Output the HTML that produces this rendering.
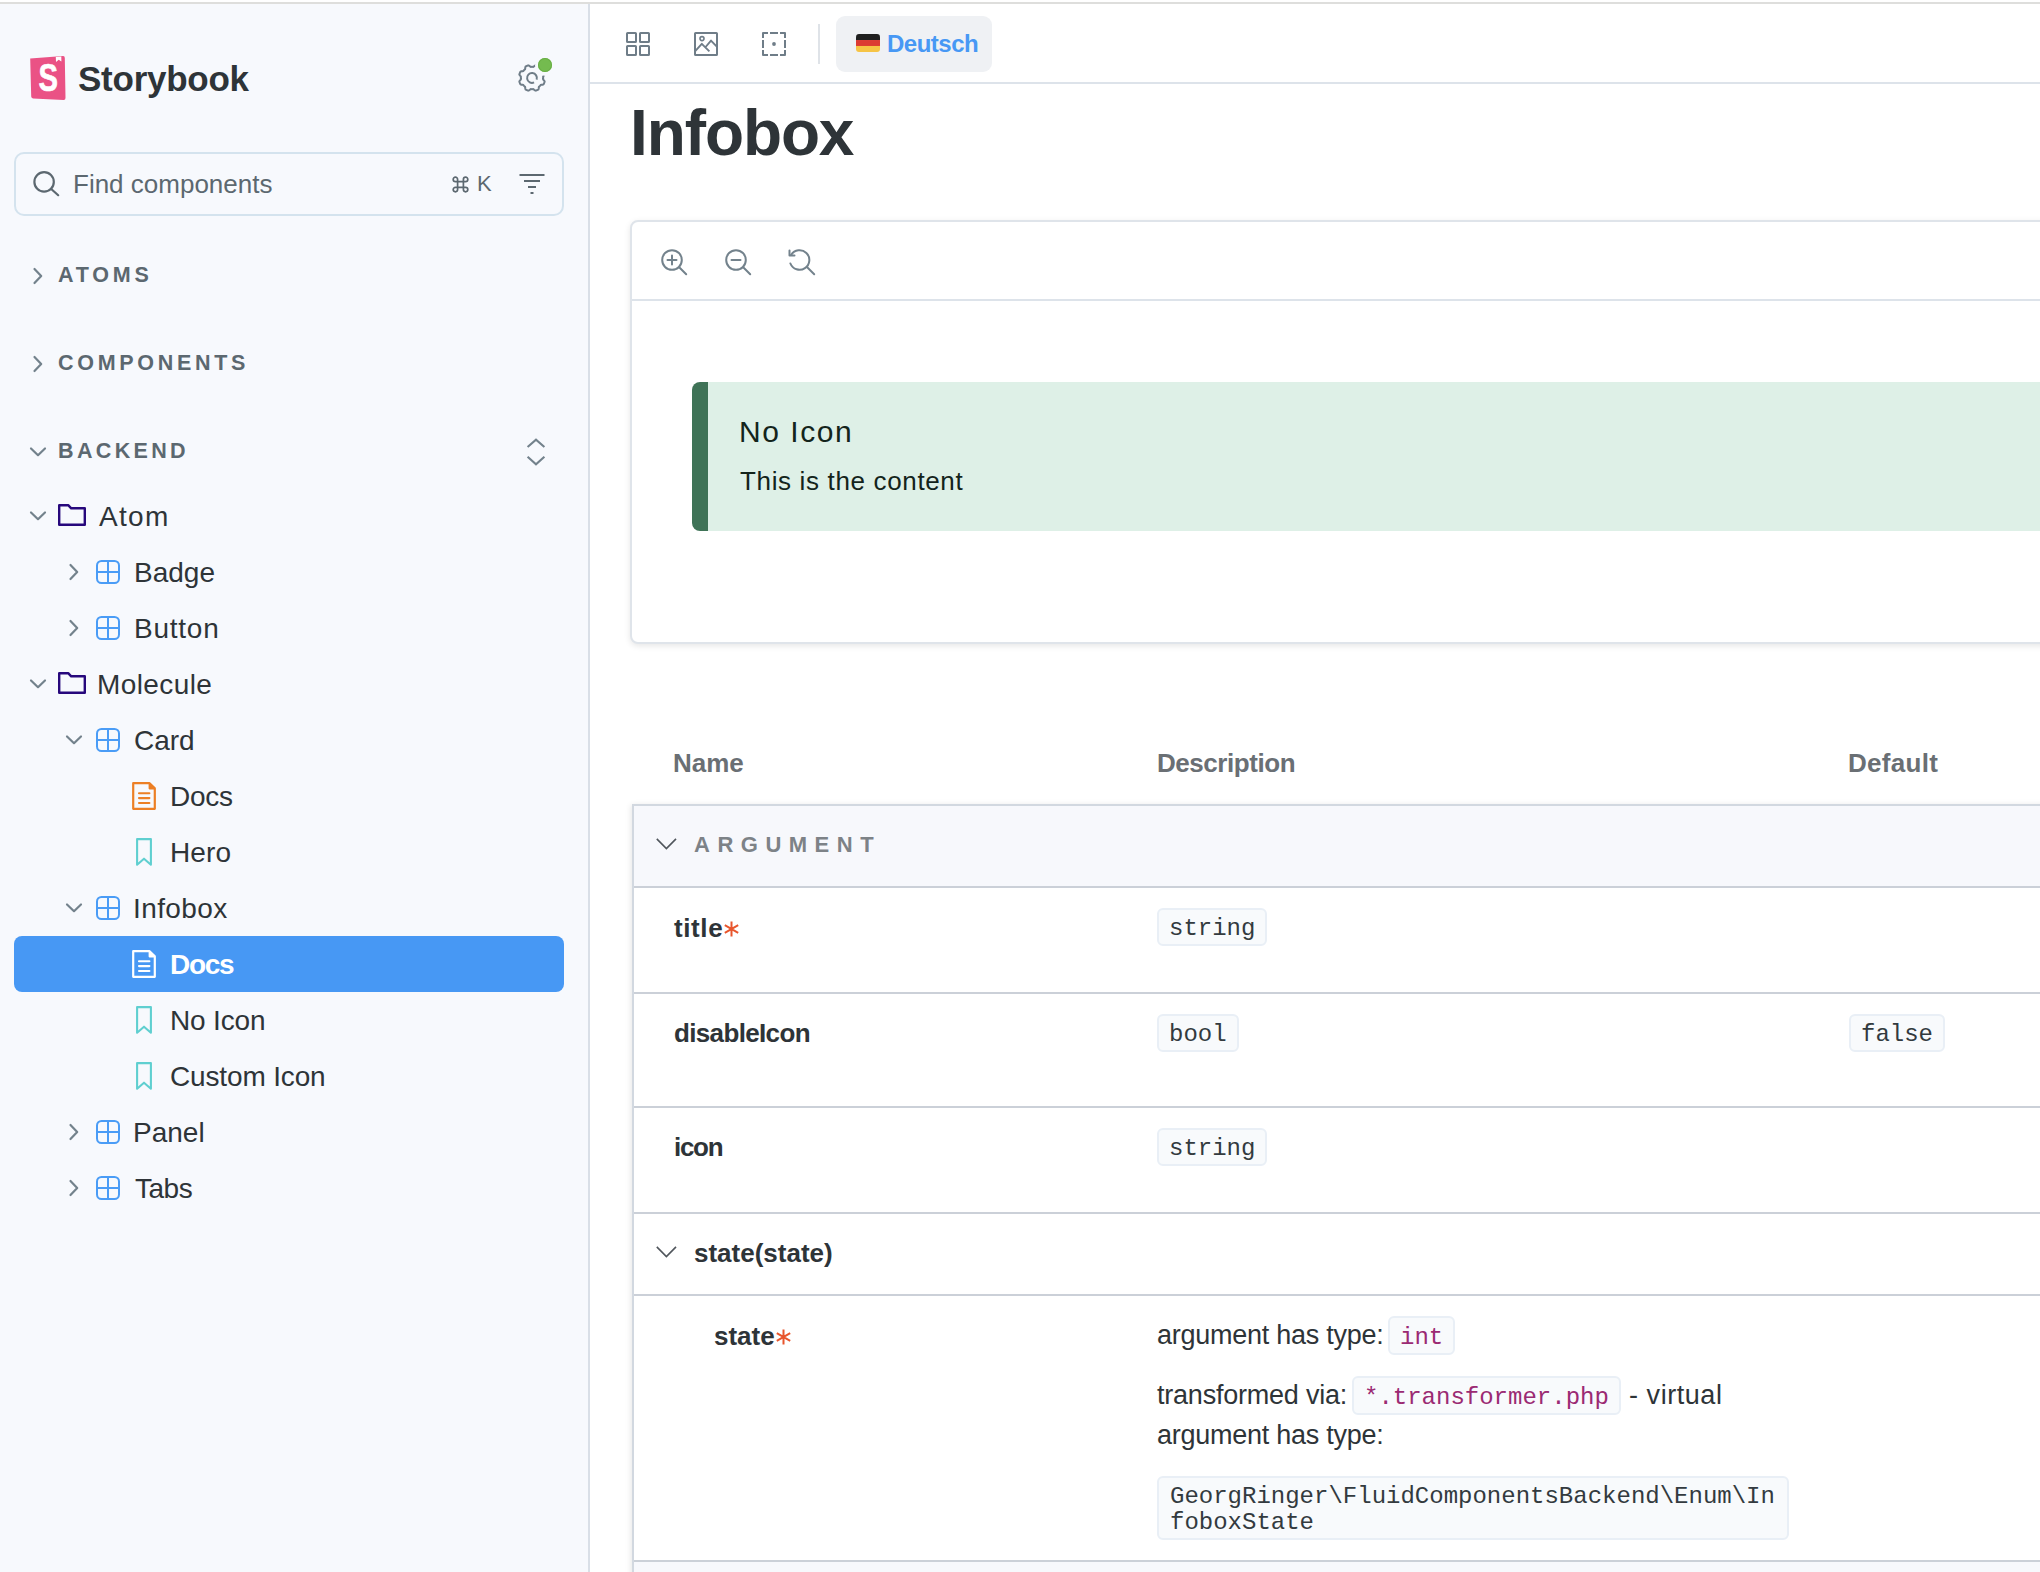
<!DOCTYPE html>
<html>
<head>
<meta charset="utf-8">
<title>Storybook</title>
<style>
*{box-sizing:border-box;margin:0;padding:0}
html,body{width:2040px;height:1572px;overflow:hidden;background:#fff}
body{font-family:"Liberation Sans",sans-serif;color:#2e3438;position:relative}
.abs{position:absolute}
svg{display:block;overflow:visible}
#topline{left:0;top:2px;width:2040px;height:2px;background:#dededc}
#sidebar{left:0;top:4px;width:588px;height:1568px;background:#f7f9fd}
#sdiv{left:588px;top:4px;width:2px;height:1568px;background:#d9dfe7}
#main{left:590px;top:4px;width:1450px;height:1568px;background:#fff;overflow:hidden}
.t{position:absolute;white-space:nowrap;line-height:56px;height:56px}
.tree{margin-top:1px}
.tree{font-size:28px;color:#2e3438}
.sec{font-size:21.5px;font-weight:bold;letter-spacing:3.8px;color:#5c6870}
.ic{position:absolute}
#logotxt{left:78px;top:57px;font-size:35px;line-height:44px;font-weight:bold;color:#2e3438;letter-spacing:-0.25px;white-space:nowrap}
#sel{left:14px;top:936px;width:550px;height:56px;border-radius:8px;background:#4798f4}
#search{left:14px;top:152px;width:550px;height:64px;border:2px solid #d4e3ee;border-radius:10px}
#tb-line{left:590px;top:82px;width:1450px;height:2px;background:#dde3ea}
#lang{left:836px;top:16px;width:156px;height:56px;border-radius:9px;background:#eff1f4}
#preview{left:630px;top:220px;width:1500px;height:424px;border:2px solid #dfe4ea;border-radius:8px;box-shadow:0 2px 6px rgba(0,0,0,.10);background:#fff}
#pv-line{left:632px;top:299px;width:1410px;height:2px;background:#dde3ea}
#infobox{left:692px;top:382px;width:1400px;height:149px;background:#def0e7;border-left:16px solid #3f7357;border-radius:8px 0 0 8px}
.hd{font-size:26px;font-weight:bold;color:#6a6f74}
#table{left:632px;top:804px;width:1500px;height:900px;border:2px solid #d2d8e0;border-right:0;box-shadow:0 2px 6px 1px rgba(0,0,0,.10);background:#fff}
.rl{position:absolute;left:634px;width:1410px;height:2px;background:#cbd0d8}
.secrow{position:absolute;left:634px;width:1410px;background:#f7f8fc}
.nm{font-size:26px;font-weight:bold;color:#2e3438}
.req{color:#e8552c;font-weight:normal}
.code{position:absolute;font-family:"Liberation Mono",monospace;font-size:24px;line-height:27px;color:#333a3f;background:#f8fafc;border:2px solid #e9eff6;border-radius:6px;white-space:nowrap}
.pink{color:#9b2a73}
.desc{font-size:27px;color:#2e3438}
#h1{left:630px;top:95px;font-size:64px;line-height:76px;font-weight:bold;color:#2e3438;letter-spacing:-1.1px;white-space:nowrap}
.c1{height:38px;padding:5px 10px 0 10px}
.c2{height:39px;padding:6px 10px 0 10px}

</style>
</head>
<body>
<div class="abs" id="topline"></div>
<div class="abs" id="sidebar"></div>
<div class="abs" id="sdiv"></div>
<div class="abs" id="main"></div>
<svg class="ic" style="left:30px;top:56px" width="36" height="44" viewBox="0 0 36 44">
<path d="M0.2 2.6 L33.0 0.1 Q34.8 0 34.8 1.9 L35.5 42 Q35.5 44 33.5 43.9 L3.0 42.4 Q1.3 42.3 1.2 40.6 Z" fill="#ea5285"/>
<path d="M25.8 0.9 L31.3 0.5 L31.4 5.6 L28.7 3.7 L26 5.9 Z" fill="#fff"/>
<text x="18.3" y="35.2" text-anchor="middle" font-family="Liberation Sans, sans-serif" font-weight="bold" font-size="38" fill="#fff" stroke="#fff" stroke-width="0.7" textLength="19.5" lengthAdjust="spacingAndGlyphs">S</text>
</svg>
<div class="abs" id="logotxt">Storybook</div>
<svg class="ic" style="left:517px;top:63px" width="30" height="30" viewBox="0 0 30 30">
<g fill="none" stroke="#6f7d88" stroke-width="2" stroke-linejoin="round" stroke-linecap="butt">
<path d="M26.15 15.00 L26.15 15.19 L26.14 15.39 L26.13 15.58 L26.12 15.78 L26.11 15.97 L26.09 16.17 L26.12 16.36 L26.29 16.59 L26.48 16.82 L26.67 17.06 L26.87 17.31 L27.06 17.56 L27.24 17.83 L27.41 18.09 L27.56 18.36 L27.64 18.62 L27.58 18.84 L27.51 19.06 L27.43 19.28 L27.36 19.50 L27.28 19.71 L27.19 19.93 L27.10 20.14 L27.01 20.35 L26.92 20.56 L26.82 20.76 L26.72 20.97 L26.61 21.17 L26.50 21.38 L26.26 21.50 L25.96 21.59 L25.65 21.66 L25.34 21.71 L25.02 21.76 L24.71 21.80 L24.40 21.83 L24.11 21.86 L23.83 21.90 L23.67 22.02 L23.54 22.17 L23.42 22.32 L23.29 22.46 L23.15 22.60 L23.02 22.75 L22.88 22.88 L22.75 23.02 L22.60 23.15 L22.46 23.29 L22.32 23.42 L22.17 23.54 L22.02 23.67 L21.90 23.83 L21.86 24.11 L21.83 24.40 L21.80 24.71 L21.76 25.02 L21.71 25.34 L21.66 25.65 L21.59 25.96 L21.50 26.26 L21.38 26.50 L21.17 26.61 L20.97 26.72 L20.76 26.82 L20.56 26.92 L20.35 27.01 L20.14 27.10 L19.93 27.19 L19.71 27.28 L19.50 27.36 L19.28 27.43 L19.06 27.51 L18.84 27.58 L18.62 27.64 L18.36 27.56 L18.09 27.41 L17.83 27.24 L17.56 27.06 L17.31 26.87 L17.06 26.67 L16.82 26.48 L16.59 26.29 L16.36 26.12 L16.17 26.09 L15.97 26.11 L15.78 26.12 L15.58 26.13 L15.39 26.14 L15.19 26.15 L15.00 26.15 L14.81 26.15 L14.61 26.14 L14.42 26.13 L14.22 26.12 L14.03 26.11 L13.83 26.09 L13.64 26.12 L13.41 26.29 L13.18 26.48 L12.94 26.67 L12.69 26.87 L12.44 27.06 L12.17 27.24 L11.91 27.41 L11.64 27.56 L11.38 27.64 L11.16 27.58 L10.94 27.51 L10.72 27.43 L10.50 27.36 L10.29 27.28 L10.07 27.19 L9.86 27.10 L9.65 27.01 L9.44 26.92 L9.24 26.82 L9.03 26.72 L8.83 26.61 L8.62 26.50 L8.50 26.26 L8.41 25.96 L8.34 25.65 L8.29 25.34 L8.24 25.02 L8.20 24.71 L8.17 24.40 L8.14 24.11 L8.10 23.83 L7.98 23.67 L7.83 23.54 L7.68 23.42 L7.54 23.29 L7.40 23.15 L7.25 23.02 L7.12 22.88 L6.98 22.75 L6.85 22.60 L6.71 22.46 L6.58 22.32 L6.46 22.17 L6.33 22.02 L6.17 21.90 L5.89 21.86 L5.60 21.83 L5.29 21.80 L4.98 21.76 L4.66 21.71 L4.35 21.66 L4.04 21.59 L3.74 21.50 L3.50 21.38 L3.39 21.17 L3.28 20.97 L3.18 20.76 L3.08 20.56 L2.99 20.35 L2.90 20.14 L2.81 19.93 L2.72 19.71 L2.64 19.50 L2.57 19.28 L2.49 19.06 L2.42 18.84 L2.36 18.62 L2.44 18.36 L2.59 18.09 L2.76 17.83 L2.94 17.56 L3.13 17.31 L3.33 17.06 L3.52 16.82 L3.71 16.59 L3.88 16.36 L3.91 16.17 L3.89 15.97 L3.88 15.78 L3.87 15.58 L3.86 15.39 L3.85 15.19 L3.85 15.00 L3.85 14.81 L3.86 14.61 L3.87 14.42 L3.88 14.22 L3.89 14.03 L3.91 13.83 L3.88 13.64 L3.71 13.41 L3.52 13.18 L3.33 12.94 L3.13 12.69 L2.94 12.44 L2.76 12.17 L2.59 11.91 L2.44 11.64 L2.36 11.38 L2.42 11.16 L2.49 10.94 L2.57 10.72 L2.64 10.50 L2.72 10.29 L2.81 10.07 L2.90 9.86 L2.99 9.65 L3.08 9.44 L3.18 9.24 L3.28 9.03 L3.39 8.83 L3.50 8.62 L3.74 8.50 L4.04 8.41 L4.35 8.34 L4.66 8.29 L4.98 8.24 L5.29 8.20 L5.60 8.17 L5.89 8.14 L6.17 8.10 L6.33 7.98 L6.46 7.83 L6.58 7.68 L6.71 7.54 L6.85 7.40 L6.98 7.25 L7.12 7.12 L7.25 6.98 L7.40 6.85 L7.54 6.71 L7.68 6.58 L7.83 6.46 L7.98 6.33 L8.10 6.17 L8.14 5.89 L8.17 5.60 L8.20 5.29 L8.24 4.98 L8.29 4.66 L8.34 4.35 L8.41 4.04 L8.50 3.74 L8.62 3.50 L8.83 3.39 L9.03 3.28 L9.24 3.18 L9.44 3.08 L9.65 2.99 L9.86 2.90 L10.07 2.81 L10.29 2.72 L10.50 2.64 L10.72 2.57 L10.94 2.49 L11.16 2.42 L11.38 2.36 L11.64 2.44 L11.91 2.59 L12.17 2.76 L12.44 2.94 L12.69 3.13 L12.94 3.33 L13.18 3.52 L13.41 3.71 L13.64 3.88 L13.83 3.91 L14.03 3.89 L14.22 3.88 L14.42 3.87 L14.61 3.86 L14.81 3.85 L15.00 3.85 L15.19 3.85 L15.39 3.86 L15.58 3.87 L15.78 3.88 L15.97 3.89 L16.17 3.91 L16.36 3.88 L16.59 3.71 L16.82 3.52 L17.06 3.33 L17.31 3.13 L17.56 2.94 L17.83 2.76 L18.09 2.59 L18.36 2.44 L18.62 2.36 L18.84 2.42 L19.06 2.49 L19.28 2.57 L19.50 2.64 L19.71 2.72 L19.93 2.81 L20.14 2.90 L20.35 2.99 L20.56 3.08 L20.76 3.18 L20.97 3.28 L21.17 3.39 L21.38 3.50 L21.50 3.74 L21.59 4.04 L21.66 4.35 L21.71 4.66 L21.76 4.98 L21.80 5.29 L21.83 5.60 L21.86 5.89 L21.90 6.17 L22.02 6.33 L22.17 6.46 L22.32 6.58 L22.46 6.71 L22.60 6.85 L22.75 6.98 L22.88 7.12 L23.02 7.25 L23.15 7.40 L23.29 7.54 L23.42 7.68 L23.54 7.83 L23.67 7.98 L23.83 8.10 L24.11 8.14 L24.40 8.17 L24.71 8.20 L25.02 8.24 L25.34 8.29 L25.65 8.34 L25.96 8.41 L26.26 8.50 L26.50 8.62 L26.61 8.83 L26.72 9.03 L26.82 9.24 L26.92 9.44 L27.01 9.65 L27.10 9.86 L27.19 10.07 L27.28 10.29 L27.36 10.50 L27.43 10.72 L27.51 10.94 L27.58 11.16 L27.64 11.38 L27.56 11.64 L27.41 11.91 L27.24 12.17 L27.06 12.44 L26.87 12.69 L26.67 12.94 L26.48 13.18 L26.29 13.41 L26.12 13.64 L26.09 13.83 L26.11 14.03 L26.12 14.22 L26.13 14.42 L26.14 14.61 L26.15 14.81 Z"/>
<path d="M17.07 19.44 A4.9 4.9 0 1 1 19.6 16.68"/>
</g></svg>
<div class="abs" style="left:534.5px;top:54.5px;width:21px;height:21px;border-radius:11px;background:#f7f9fd"></div>
<div class="abs" style="left:538px;top:58px;width:14px;height:14px;border-radius:7px;background:#74bb4f;box-shadow:inset 0 0 0 1px #69af45"></div>
<div class="abs" id="search"></div>
<svg class="ic" style="left:32px;top:170px" width="30" height="30" viewBox="0 0 30 30"><circle cx="12.1" cy="11.9" r="9.7" fill="none" stroke="#5c6870" stroke-width="2.2"/><path d="M19.2 19 L26.2 25.2" stroke="#5c6870" stroke-width="2.2" stroke-linecap="round"/></svg>
<div class="t" style="left:74px;top:156px;font-size:26px;color:#5c6870;left:73px">Find components</div>
<svg class="ic" style="left:452px;top:176px" width="17" height="17" viewBox="0 0 17 17"><path d="M5.6 5.6 H11.4 V11.4 H5.6 Z M5.6 5.6 V3.4 A2.2 2.2 0 1 0 3.4 5.6 H5.6 M11.4 5.6 H13.6 A2.2 2.2 0 1 0 11.4 3.4 V5.6 M11.4 11.4 V13.6 A2.2 2.2 0 1 0 13.6 11.4 H11.4 M5.6 11.4 H3.4 A2.2 2.2 0 1 0 5.6 13.6 V11.4" fill="none" stroke="#5c6870" stroke-width="1.7"/></svg>
<div class="t" style="left:477px;top:156px;font-size:22px;color:#5c6870">K</div>
<svg class="ic" style="left:519px;top:173px" width="26" height="22" viewBox="0 0 26 22"><path d="M0.5 2H25.5M5 8H21M9 14H17M11.5 20H14.5" stroke="#5c6870" stroke-width="2" fill="none"/></svg>
<svg class="ic" style="left:34.0px;top:268.0px" width="8" height="16" viewBox="0 0 8 16"><path d="M0.5 1 L7.2 8.0 L0.5 15" fill="none" stroke="#73828c" stroke-width="2.2" stroke-linecap="round" stroke-linejoin="round"/></svg>
<div class="t sec" style="left:58px;top:247px;">ATOMS</div>
<svg class="ic" style="left:34.0px;top:356.0px" width="8" height="16" viewBox="0 0 8 16"><path d="M0.5 1 L7.2 8.0 L0.5 15" fill="none" stroke="#73828c" stroke-width="2.2" stroke-linecap="round" stroke-linejoin="round"/></svg>
<div class="t sec" style="left:58px;top:335px;letter-spacing:3.7px">COMPONENTS</div>
<svg class="ic" style="left:30.0px;top:448.0px" width="16" height="8" viewBox="0 0 16 8"><path d="M1 0.5 L8.0 7.2 L15 0.5" fill="none" stroke="#73828c" stroke-width="2.2" stroke-linecap="round" stroke-linejoin="round"/></svg>
<div class="t sec" style="left:58px;top:423px;letter-spacing:3.35px">BACKEND</div>
<svg class="ic" style="left:526px;top:437px" width="20" height="30" viewBox="0 0 20 30"><path d="M1.6 10 L10 2.6 L18.4 10 M1.6 19.8 L10 27.4 L18.4 19.8" fill="none" stroke="#73828c" stroke-width="2.1" stroke-linecap="butt" stroke-linejoin="miter"/></svg>
<div class="abs" id="sel"></div>
<svg class="ic" style="left:30.0px;top:512.0px" width="16" height="8" viewBox="0 0 16 8"><path d="M1 0.5 L8.0 7.2 L15 0.5" fill="none" stroke="#73828c" stroke-width="2.2" stroke-linecap="round" stroke-linejoin="round"/></svg>
<svg class="ic" style="left:58px;top:504px" width="28" height="22" viewBox="0 0 28 22"><path d="M1.2 1.2 H10.2 L13.2 4.3 H26.8 V20.8 H1.2 Z" fill="none" stroke="#27087c" stroke-width="2.4" stroke-linejoin="round"/></svg>
<div class="t tree" style="left:99px;top:488px;letter-spacing:1.3px;">Atom</div>
<svg class="ic" style="left:70.0px;top:564.0px" width="8" height="16" viewBox="0 0 8 16"><path d="M0.5 1 L7.2 8.0 L0.5 15" fill="none" stroke="#73828c" stroke-width="2.2" stroke-linecap="round" stroke-linejoin="round"/></svg>
<svg class="ic" style="left:96px;top:560px" width="24" height="24" viewBox="0 0 24 24"><rect x="1" y="1" width="22" height="22" rx="4.5" fill="none" stroke="#4a9cf6" stroke-width="2"/><path d="M12 1V23M1 12H23" stroke="#4a9cf6" stroke-width="2" fill="none"/></svg>
<div class="t tree" style="left:134px;top:544px;letter-spacing:0px;">Badge</div>
<svg class="ic" style="left:70.0px;top:620.0px" width="8" height="16" viewBox="0 0 8 16"><path d="M0.5 1 L7.2 8.0 L0.5 15" fill="none" stroke="#73828c" stroke-width="2.2" stroke-linecap="round" stroke-linejoin="round"/></svg>
<svg class="ic" style="left:96px;top:616px" width="24" height="24" viewBox="0 0 24 24"><rect x="1" y="1" width="22" height="22" rx="4.5" fill="none" stroke="#4a9cf6" stroke-width="2"/><path d="M12 1V23M1 12H23" stroke="#4a9cf6" stroke-width="2" fill="none"/></svg>
<div class="t tree" style="left:134px;top:600px;letter-spacing:0.75px;">Button</div>
<svg class="ic" style="left:30.0px;top:680.0px" width="16" height="8" viewBox="0 0 16 8"><path d="M1 0.5 L8.0 7.2 L15 0.5" fill="none" stroke="#73828c" stroke-width="2.2" stroke-linecap="round" stroke-linejoin="round"/></svg>
<svg class="ic" style="left:58px;top:672px" width="28" height="22" viewBox="0 0 28 22"><path d="M1.2 1.2 H10.2 L13.2 4.3 H26.8 V20.8 H1.2 Z" fill="none" stroke="#27087c" stroke-width="2.4" stroke-linejoin="round"/></svg>
<div class="t tree" style="left:97px;top:656px;letter-spacing:0.4px;">Molecule</div>
<svg class="ic" style="left:66.0px;top:736.0px" width="16" height="8" viewBox="0 0 16 8"><path d="M1 0.5 L8.0 7.2 L15 0.5" fill="none" stroke="#73828c" stroke-width="2.2" stroke-linecap="round" stroke-linejoin="round"/></svg>
<svg class="ic" style="left:96px;top:728px" width="24" height="24" viewBox="0 0 24 24"><rect x="1" y="1" width="22" height="22" rx="4.5" fill="none" stroke="#4a9cf6" stroke-width="2"/><path d="M12 1V23M1 12H23" stroke="#4a9cf6" stroke-width="2" fill="none"/></svg>
<div class="t tree" style="left:134px;top:712px;letter-spacing:0px;">Card</div>
<svg class="ic" style="left:132px;top:782px" width="24" height="28" viewBox="0 0 24 28"><path d="M1.2 1.2 H17.6 L22.8 6.4 V26.8 H1.2 Z" fill="none" stroke="#ec7f25" stroke-width="2.2" stroke-linejoin="round"/><path d="M17.4 1.8 V6.6 H22.2 Z" fill="#ec7f25" stroke="#ec7f25" stroke-width="1.6" stroke-linejoin="round"/><path d="M7 11.2H17.4M7 16.1H17.4M7 21H17.4" stroke="#ec7f25" stroke-width="2.1" stroke-linecap="round" fill="none"/></svg>
<div class="t tree" style="left:170px;top:768px;letter-spacing:-0.3px;">Docs</div>
<svg class="ic" style="left:136px;top:838px" width="16" height="28" viewBox="0 0 16 28"><path d="M1.1 1.1 H14.9 V26.7 L8 20.7 L1.1 26.7 Z" fill="none" stroke="#5fcfd0" stroke-width="2.1" stroke-linejoin="round"/></svg>
<div class="t tree" style="left:170px;top:824px;letter-spacing:0.1px;">Hero</div>
<svg class="ic" style="left:66.0px;top:904.0px" width="16" height="8" viewBox="0 0 16 8"><path d="M1 0.5 L8.0 7.2 L15 0.5" fill="none" stroke="#73828c" stroke-width="2.2" stroke-linecap="round" stroke-linejoin="round"/></svg>
<svg class="ic" style="left:96px;top:896px" width="24" height="24" viewBox="0 0 24 24"><rect x="1" y="1" width="22" height="22" rx="4.5" fill="none" stroke="#4a9cf6" stroke-width="2"/><path d="M12 1V23M1 12H23" stroke="#4a9cf6" stroke-width="2" fill="none"/></svg>
<div class="t tree" style="left:133px;top:880px;letter-spacing:0.4px;">Infobox</div>
<svg class="ic" style="left:132px;top:950px" width="24" height="28" viewBox="0 0 24 28"><path d="M1.2 1.2 H17.6 L22.8 6.4 V26.8 H1.2 Z" fill="none" stroke="#ffffff" stroke-width="2.2" stroke-linejoin="round"/><path d="M17.4 1.8 V6.6 H22.2 Z" fill="#ffffff" stroke="#ffffff" stroke-width="1.6" stroke-linejoin="round"/><path d="M7 11.2H17.4M7 16.1H17.4M7 21H17.4" stroke="#ffffff" stroke-width="2.1" stroke-linecap="round" fill="none"/></svg>
<div class="t tree" style="left:170px;top:936px;letter-spacing:-1.3px;color:#fff;font-weight:bold">Docs</div>
<svg class="ic" style="left:136px;top:1006px" width="16" height="28" viewBox="0 0 16 28"><path d="M1.1 1.1 H14.9 V26.7 L8 20.7 L1.1 26.7 Z" fill="none" stroke="#5fcfd0" stroke-width="2.1" stroke-linejoin="round"/></svg>
<div class="t tree" style="left:170px;top:992px;letter-spacing:-0.15px;">No Icon</div>
<svg class="ic" style="left:136px;top:1062px" width="16" height="28" viewBox="0 0 16 28"><path d="M1.1 1.1 H14.9 V26.7 L8 20.7 L1.1 26.7 Z" fill="none" stroke="#5fcfd0" stroke-width="2.1" stroke-linejoin="round"/></svg>
<div class="t tree" style="left:170px;top:1048px;letter-spacing:-0.15px;">Custom Icon</div>
<svg class="ic" style="left:70.0px;top:1124.0px" width="8" height="16" viewBox="0 0 8 16"><path d="M0.5 1 L7.2 8.0 L0.5 15" fill="none" stroke="#73828c" stroke-width="2.2" stroke-linecap="round" stroke-linejoin="round"/></svg>
<svg class="ic" style="left:96px;top:1120px" width="24" height="24" viewBox="0 0 24 24"><rect x="1" y="1" width="22" height="22" rx="4.5" fill="none" stroke="#4a9cf6" stroke-width="2"/><path d="M12 1V23M1 12H23" stroke="#4a9cf6" stroke-width="2" fill="none"/></svg>
<div class="t tree" style="left:133px;top:1104px;letter-spacing:0px;">Panel</div>
<svg class="ic" style="left:70.0px;top:1180.0px" width="8" height="16" viewBox="0 0 8 16"><path d="M0.5 1 L7.2 8.0 L0.5 15" fill="none" stroke="#73828c" stroke-width="2.2" stroke-linecap="round" stroke-linejoin="round"/></svg>
<svg class="ic" style="left:96px;top:1176px" width="24" height="24" viewBox="0 0 24 24"><rect x="1" y="1" width="22" height="22" rx="4.5" fill="none" stroke="#4a9cf6" stroke-width="2"/><path d="M12 1V23M1 12H23" stroke="#4a9cf6" stroke-width="2" fill="none"/></svg>
<div class="t tree" style="left:135px;top:1160px;letter-spacing:-0.5px;">Tabs</div>
<!-- toolbar -->
<div class="abs" id="tb-line"></div>
<svg class="ic" style="left:626px;top:32px" width="24" height="24" viewBox="0 0 24 24"><g fill="none" stroke="#6f7d88" stroke-width="2" stroke-linejoin="round"><rect x="1" y="1" width="9" height="9" rx="0.6"/><rect x="14" y="1" width="9" height="9" rx="0.6"/><rect x="1" y="14" width="9" height="9" rx="0.6"/><rect x="14" y="14" width="9" height="9" rx="0.6"/></g></svg>
<svg class="ic" style="left:694px;top:32px" width="24" height="24" viewBox="0 0 24 24"><g fill="none" stroke="#6f7d88" stroke-width="2" stroke-linejoin="round"><rect x="1" y="1" width="22" height="22" rx="0.6"/><circle cx="8" cy="6.6" r="2" stroke-width="1.6"/><path d="M1.2 19.2 L7.8 11.8 L15.4 19.4 M11.6 15 L17 8.6 L22.8 14.6" stroke-width="1.9"/></g></svg>
<svg class="ic" style="left:762px;top:32px" width="24" height="24" viewBox="0 0 24 24"><g fill="none" stroke="#6f7d88" stroke-width="2" stroke-linejoin="round"><path d="M1 6V1H6 M8 1H16 M18 1H23V6 M23 8V16 M23 18V23H18 M16 23H8 M6 23H1V18 M1 16V8"/><circle cx="12" cy="12" r="1.9" fill="#6f7d88" stroke="none"/></g></svg>
<div class="abs" style="left:818px;top:24px;width:2px;height:40px;background:#dfe3e8"></div>
<div class="abs" id="lang"></div>
<svg class="ic" style="left:856px;top:34px" width="24" height="18" viewBox="0 0 24 17" preserveAspectRatio="none"><defs><clipPath id="fl"><rect x="0" y="0" width="24" height="17" rx="3"/></clipPath></defs><g clip-path="url(#fl)"><rect width="24" height="6" fill="#1f1f1f"/><rect y="5.7" width="24" height="6" fill="#dc3a32"/><rect y="11.3" width="24" height="6" fill="#f6c445"/></g></svg>
<div class="t" style="left:887px;top:16px;font-size:24px;font-weight:bold;letter-spacing:-0.5px;color:#4798f4">Deutsch</div>

<!-- title -->
<div class="abs" id="h1">Infobox</div>

<!-- preview -->
<div class="abs" id="preview"></div>
<div class="abs" id="pv-line"></div>
<svg class="ic" style="left:661px;top:249px" width="27" height="27" viewBox="0 0 27 27"><g fill="none" stroke="#73828c" stroke-width="2" stroke-linecap="round"><circle cx="11" cy="11" r="9.8"/><path d="M18.2 18.2 L25.2 25.2 M6.5 11H15.5 M11 6.5V15.5"/></g></svg>
<svg class="ic" style="left:725px;top:249px" width="27" height="27" viewBox="0 0 27 27"><g fill="none" stroke="#73828c" stroke-width="2" stroke-linecap="round"><circle cx="11" cy="11" r="9.8"/><path d="M18.2 18.2 L25.2 25.2 M6.5 11H15.5"/></g></svg>
<svg class="ic" style="left:788px;top:249px" width="28" height="27" viewBox="0 0 28 27"><g fill="none" stroke="#73828c" stroke-width="2" stroke-linecap="round" stroke-linejoin="round"><path d="M3.2 5.8 A9.8 9.8 0 1 1 2.4 14.5"/><path d="M1.5 1.5 V6.5 H6.5"/><path d="M19.2 18.2 L26.2 25.2"/></g></svg>
<div class="abs" id="infobox"></div>
<div class="abs" style="left:739px;top:412px;font-size:30px;letter-spacing:1.55px;line-height:40px;color:#13241b;white-space:nowrap">No Icon</div>
<div class="abs" style="left:740px;top:463px;font-size:26px;letter-spacing:0.65px;line-height:36px;color:#13241b;white-space:nowrap">This is the content</div>

<!-- table -->
<div class="t hd" style="left:673px;top:735px">Name</div>
<div class="t hd" style="left:1157px;top:735px;letter-spacing:-0.45px">Description</div>
<div class="t hd" style="left:1848px;top:735px;letter-spacing:0.3px">Default</div>
<div class="abs" id="table"></div>
<div class="secrow" style="top:806px;height:80px"></div>
<div class="rl" style="top:886px"></div>
<div class="rl" style="top:992px"></div>
<div class="rl" style="top:1106px"></div>
<div class="rl" style="top:1212px"></div>
<div class="rl" style="top:1294px"></div>
<div class="rl" style="top:1560px"></div>
<div class="secrow" style="top:1562px;height:20px"></div>

<svg class="ic" style="left:655.5px;top:838px" width="21" height="12" viewBox="0 0 21 12"><path d="M0.8 0.9 L10.4 10.6 L20 0.9" fill="none" stroke="#50565c" stroke-width="1.6" stroke-linecap="butt" stroke-linejoin="miter"/></svg>
<div class="t" style="left:694px;top:817px;font-size:22px;font-weight:bold;letter-spacing:7.5px;color:#7d8287">ARGUMENT</div>

<div class="t nm" style="left:674px;top:900px;letter-spacing:0.6px">title<svg style="display:inline-block;margin-left:1px;vertical-align:0px" width="15" height="16" viewBox="0 0 15 16"><path d="M7.5 0.5V15.5M0.8 4.2L14.2 11.8M14.2 4.2L0.8 11.8" stroke="#e8552c" stroke-width="2" fill="none"/></svg></div>
<div class="code c1" style="left:1157px;top:908px">string</div>

<div class="t nm" style="left:674px;top:1005px;letter-spacing:-0.65px">disableIcon</div>
<div class="code c1" style="left:1157px;top:1014px">bool</div>
<div class="code c1" style="left:1849px;top:1014px">false</div>

<div class="t nm" style="left:674px;top:1119px;letter-spacing:-1.3px">icon</div>
<div class="code c1" style="left:1157px;top:1128px">string</div>

<svg class="ic" style="left:655.5px;top:1246px" width="21" height="12" viewBox="0 0 21 12"><path d="M0.8 0.9 L10.4 10.6 L20 0.9" fill="none" stroke="#50565c" stroke-width="1.6" stroke-linecap="butt" stroke-linejoin="miter"/></svg>
<div class="t nm" style="left:694px;top:1225px">state(state)</div>

<div class="t nm" style="left:714px;top:1308px">state<svg style="display:inline-block;margin-left:1px;vertical-align:0px" width="15" height="16" viewBox="0 0 15 16"><path d="M7.5 0.5V15.5M0.8 4.2L14.2 11.8M14.2 4.2L0.8 11.8" stroke="#e8552c" stroke-width="2" fill="none"/></svg></div>
<div class="t desc" style="left:1157px;top:1307px;letter-spacing:-0.26px">argument has type:</div>
<div class="code c2 pink" style="left:1388px;top:1316px">int</div>
<div class="t desc" style="left:1157px;top:1367px;letter-spacing:-0.22px">transformed via:</div>
<div class="code c2 pink" style="left:1352px;top:1376px">*.transformer.php</div>
<div class="t desc" style="left:1629px;top:1367px;letter-spacing:0.55px">- virtual</div>
<div class="t desc" style="left:1157px;top:1407px;letter-spacing:-0.26px">argument has type:</div>
<div class="code" style="left:1157px;top:1476px;height:64px;line-height:26px;padding:5.5px 11px 0 11px;white-space:normal;width:632px">GeorgRinger\FluidComponentsBackend\Enum\In<br>foboxState</div>

</body>
</html>
